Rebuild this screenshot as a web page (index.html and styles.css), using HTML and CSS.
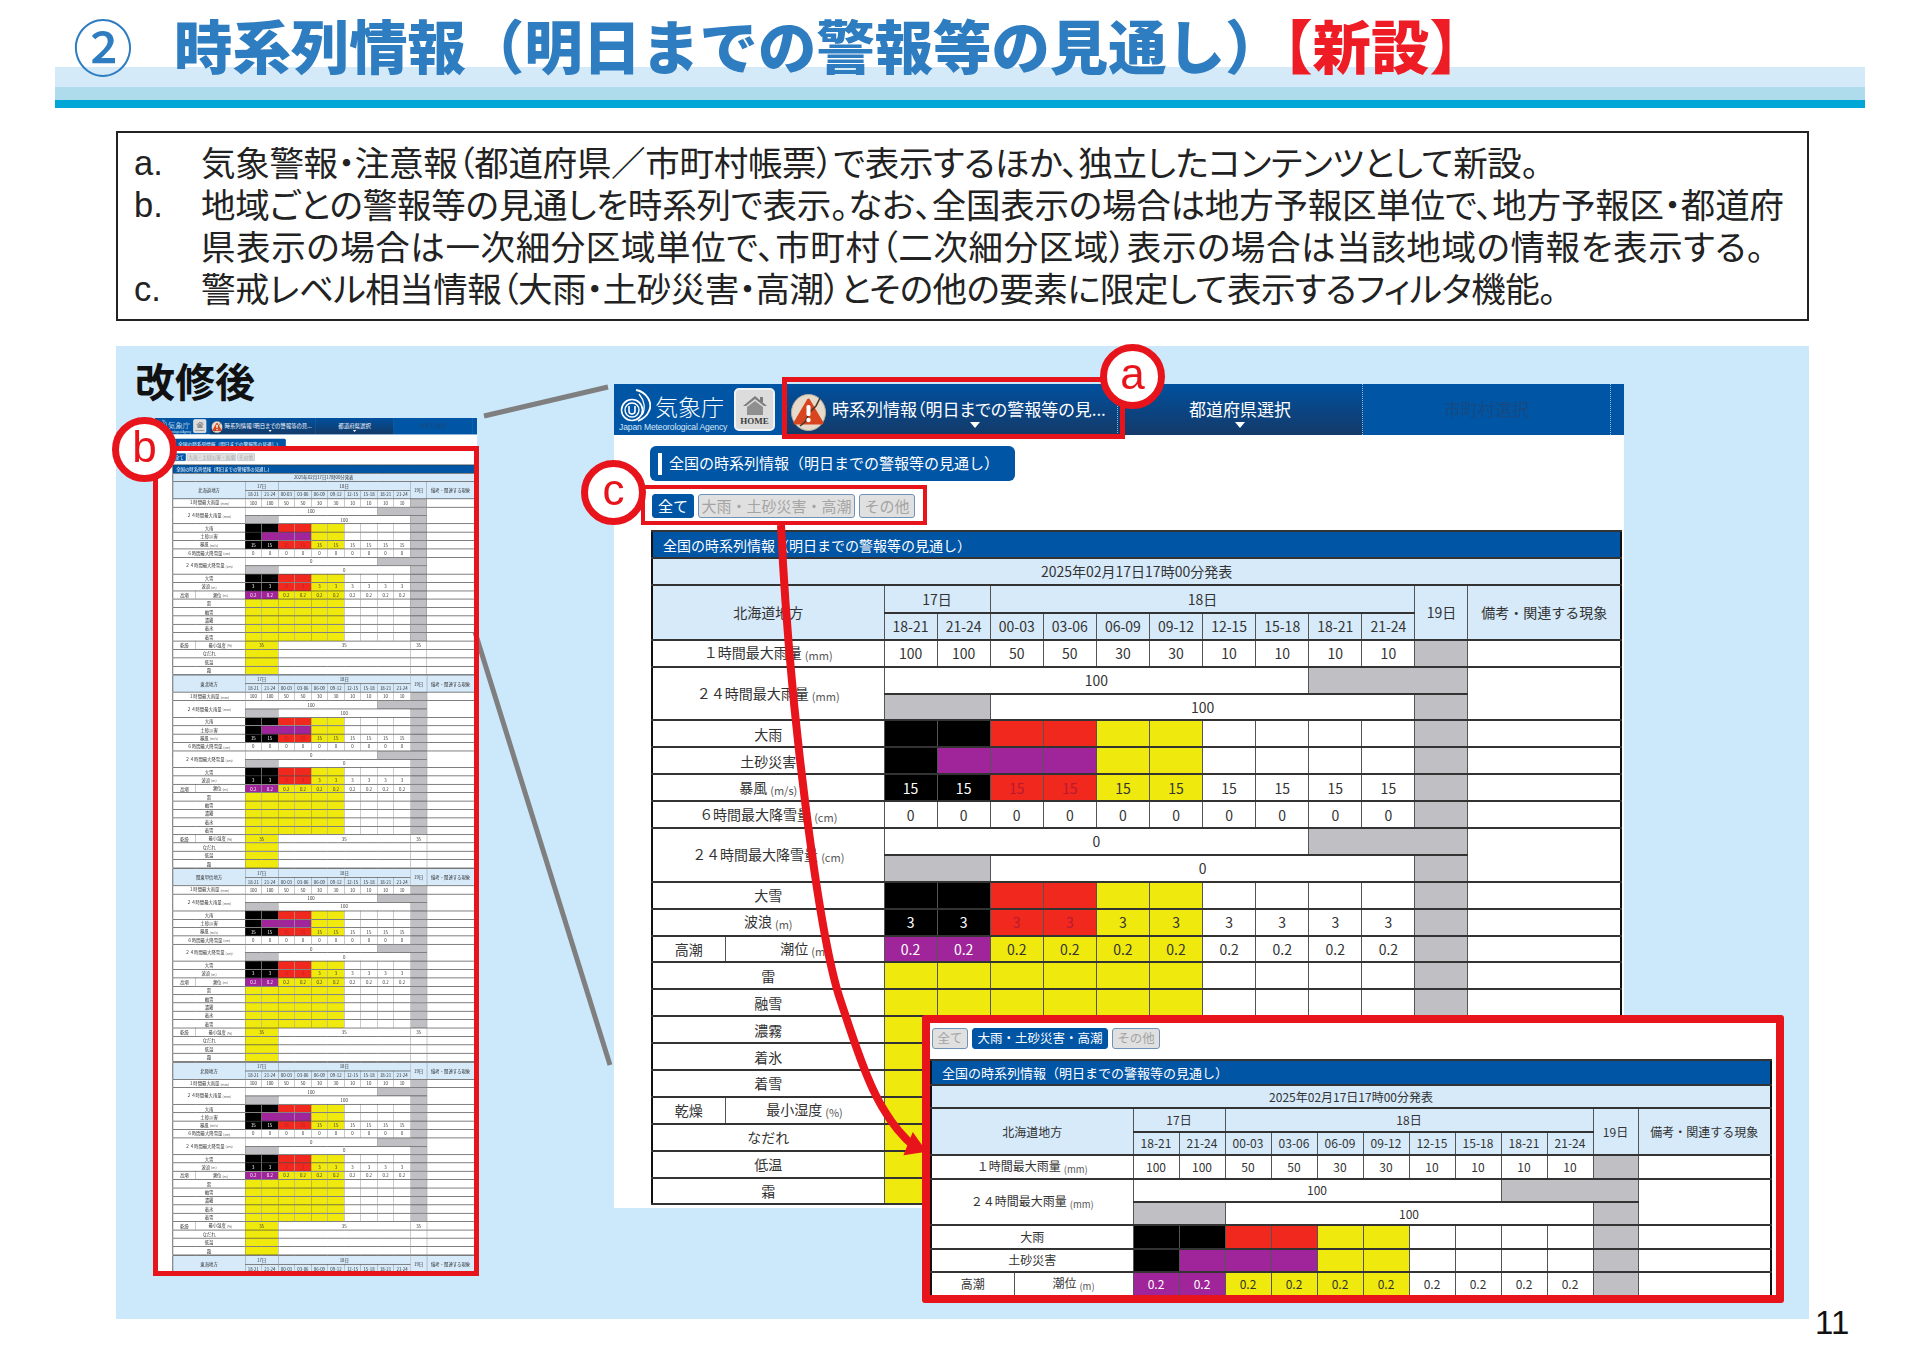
FILE: index.html
```html
<!DOCTYPE html>
<html lang="ja">
    <head>
        <meta charset="utf-8">
        <title>時系列情報(明日までの警報等の見通し)</title>
        <link rel="stylesheet" href="styles.css">
    </head>
    <body>
        <header class="title-band">
            <span class="title-no">②</span>
            <h1 class="title">時系列情報（明日までの警報等の見通し）<span class="title-new">【新設】</span></h1>
        </header>

        <ol class="notes">
            <li><span class="mark">a.</span><span class="note note-a">気象警報・注意報（都道府県／市町村帳票）で表示するほか、独立したコンテンツとして新設。</span></li>
            <li><span class="mark">b.</span><span class="note"><span class="note-b1">地域ごとの警報等の見通しを時系列で表示。なお、全国表示の場合は地方予報区単位で、地方予報区・都道府</span><br><span class="note-b2">県表示の場合は一次細分区域単位で、市町村（二次細分区域）表示の場合は当該地域の情報を表示する。</span></span></li>
            <li><span class="mark">c.</span><span class="note note-c">警戒レベル相当情報（大雨・土砂災害・高潮）とその他の要素に限定して表示するフィルタ機能。</span></li>
        </ol>

        <div class="lower">
            <section class="panel">
                <div class="left-col">
                    <h2 class="panel-title">改修後</h2>
                    <div class="mini-screen" id="miniScreen"></div>
                </div>

                <div class="screen" id="mainScreen">
                    <nav class="nav">
                        <div class="brand">
                            <div class="brand-top">
                                <svg class="logo" viewBox="0 0 32 33" width="32" height="33" fill="none" stroke="#fff">
                                    <circle cx="13" cy="21" r="10.5" stroke-width="1.6"/>
                                    <circle cx="13" cy="21" r="7" stroke-width="1.4"/>
                                    <path d="M10 17v5c0 4 6 4 6 0v-5" stroke-width="1.6"/>
                                    <path d="M17 1C28 3 34 14 30 22 28 27 24 30 19 32" stroke-width="1.8"/>
                                    <path d="M20 5c5 6 7 14 3 21" stroke-width="1.4"/>
                                </svg>
                                <span class="brand-name">気象庁</span>
                            </div>
                            <div class="brand-en">Japan Meteorological Agency</div>
                        </div>
                        <a class="home">
                            <svg viewBox="0 0 26 20" width="26" height="20">
                                <path d="M13 1L1 11h3l9-7 9 7h3z" fill="#7d7d7d"/>
                                <path d="M5 12l8-6 8 6v8H5z" fill="#8f8f8f"/>
                                <rect x="18" y="2" width="3" height="5" fill="#7d7d7d"/>
                            </svg>
                            <span>HOME</span>
                        </a>
                        <a class="tab tab-current">
                            <svg class="warn" viewBox="0 0 35 37" width="35" height="37">
                                <ellipse cx="17.5" cy="18.5" rx="17" ry="18" fill="#e6dacb" stroke="#b9ae9f"/>
                                <path d="M17.5 6L31 29H4z" fill="#d8451f" stroke="#d8451f" stroke-width="3" stroke-linejoin="round"/>
                                <path d="M29 4l-4 8-6 6-5 10-5 4" fill="none" stroke="#4a3a28" stroke-width="1.6"/>
                                <rect x="15.5" y="11" width="4" height="11" rx="1.5" fill="#fff"/>
                                <circle cx="17.5" cy="26" r="2.2" fill="#fff"/>
                            </svg>
                            <span class="tab-label">時系列情報（明日までの警報等の見...<i class="caret caret-off"></i></span>
                        </a>
                        <a class="tab tab-pref"><span class="tab-label">都道府県選択<i class="caret"></i></span></a>
                        <a class="tab tab-off"><span class="tab-label">市町村選択</span></a>
                        <a class="tab tab-end"></a>
                    </nav>
                    <div class="body" id="mainBody">
                        <h3 class="pill">全国の時系列情報（明日までの警報等の見通し）</h3>
                        <div class="filters">
                            <a class="filter filter-all on">全て</a>
                            <a class="filter filter-mid">大雨・土砂災害・高潮</a>
                            <a class="filter filter-other">その他</a>
                        </div>
                        <div class="table-slot" id="mainTable"></div>
                    </div>
                </div>

                <svg class="connect" width="1693" height="973" fill="none">
                    <path d="M368 70L492 41M359 286L494 719" stroke="#7f7f7f" stroke-width="5"/>
                    <path d="M665 179C674 373 704 593 724 653 744 713 760 770 800 802" stroke="#e8141c" stroke-width="8"/>
                    <path d="M797 788L809 805 789 808z" fill="#e8141c" stroke="#e8141c" stroke-width="2"/>
                </svg>

                <div class="zoom-card">
                    <div class="filters filters-sm">
                        <a class="filter filter-all">全て</a>
                        <a class="filter filter-mid on">大雨・土砂災害・高潮</a>
                        <a class="filter filter-other">その他</a>
                    </div>
                    <div id="zoomTable"></div>
                </div>

                <div class="hl hl-a"></div>
                <div class="hl hl-b"></div>
                <div class="hl hl-c"></div>
                <div class="badge badge-a">a</div>
                <div class="badge badge-b">b</div>
                <div class="badge badge-c">c</div>
            </section>
            <div class="page-no">11</div>
        </div>

        <script src="script.js"></script>
    </body>
</html>
```

FILE: styles.css
```css
* {
    box-sizing: border-box;
}

body {
    margin: 0;
    width: 1920px;
    height: 1356px;
    overflow: hidden;
    background: #fff;
    color: #222;
    font-family: "Noto Sans CJK JP", "Noto Sans", sans-serif;
}

h1, h2, h3 {
    margin: 0;
}

/* title */
.title-band {
    display: flex;
    margin: 0 55px;
    height: 108px;
    background: linear-gradient(to bottom, #fff 67px, #d5eaf8 67px, #d5eaf8 87px, #aedcec 87px, #aedcec 100px, #00a7d6 100px);
    color: #2f7dc1;
}

.title-no {
    width: 119px;
    padding: 5px 0 0 18px;
    font-size: 60px;
    font-weight: 500;
    line-height: 80px;
}

.title {
    font-size: 58.4px;
    font-weight: 900;
    line-height: 88px;
    white-space: nowrap;
}

.title-new {
    color: #ee1c25;
}

/* notes */
.notes {
    list-style: none;
    margin: 23px 0 0 116px;
    padding: 7px 0 0 16px;
    width: 1693px;
    height: 190px;
    border: 2px solid #222;
    font-size: 34.5px;
    line-height: 42px;
}

.notes li {
    display: flex;
}

.mark {
    width: 67px;
    height: 42px;
    font-family: "Liberation Sans", sans-serif;
    line-height: 46px;
}

.note {
    font-feature-settings: "palt";
    white-space: nowrap;
}

.note-a { letter-spacing: -0.3px; }
.note-b1 { letter-spacing: -0.2px; }
.note-b2 { letter-spacing: 0.6px; }
.note-c { letter-spacing: -0.5px; }

/* panel */
.lower {
    display: flex;
    align-items: flex-end;
    margin: 25px 0 0 116px;
}

.panel {
    position: relative;
    display: flex;
    align-items: flex-start;
    width: 1693px;
    height: 973px;
    background: #cce8fb;
}

.page-no {
    margin: 0 0 -24px 6px;
    font-family: "Liberation Sans", sans-serif;
    font-size: 33px;
    line-height: 40px;
    color: #111;
}

.left-col {
    width: 322px;
    margin-left: 39px;
}

.panel-title {
    margin-left: -20px;
    height: 72px;
    font-size: 40px;
    font-weight: 700;
    line-height: 68px;
    color: #111;
}

/* screenshot */
.screen {
    width: 1010px;
    height: 824px;
    margin: 38px 0 0 137px;
    background: #fff;
    overflow: hidden;
}

.nav {
    display: flex;
    width: 1010px;
    height: 51px;
    background: #0055a5;
    color: #fff;
}

.brand {
    width: 120px;
    padding: 5px 0 0 5px;
}

.brand-top {
    display: flex;
    align-items: flex-end;
    height: 33px;
    gap: 4px;
}

.brand-name {
    font-size: 23px;
    font-weight: 300;
    line-height: 31px;
}

.brand-en {
    font-family: "Liberation Sans", sans-serif;
    font-size: 8.6px;
    line-height: 11px;
    white-space: nowrap;
    letter-spacing: -0.15px;
    color: #d7e7f5;
}

.home {
    display: flex;
    flex-direction: column;
    align-items: center;
    width: 41px;
    height: 43px;
    margin: 4px 0 0 0;
    padding-top: 5px;
    border: 2px solid #f2f2f2;
    border-radius: 5px;
    background: #dcdcdc;
    color: #3c3c3c;
    font-family: "Liberation Serif", serif;
    font-size: 9px;
    font-weight: 700;
    line-height: 12px;
}

.tab {
    display: flex;
    justify-content: center;
    height: 51px;
    border-right: 1px dotted #8fbde0;
    background: linear-gradient(to bottom, #00509f, #143a68);
    font-size: 17px;
    white-space: nowrap;
}

.tab-label {
    display: flex;
    flex-direction: column;
    align-items: center;
    padding-top: 14px;
    line-height: 22px;
    font-feature-settings: "palt";
}

.caret {
    width: 0;
    height: 0;
    margin-top: 2px;
    border-left: 5px solid transparent;
    border-right: 5px solid transparent;
    border-top: 6px solid #fff;
}

.caret-off {
    margin-left: 12px;
}

.tab-current {
    justify-content: flex-start;
    width: 331px;
    margin-left: 12px;
    padding-left: 4px;
    gap: 6px;
}

.warn {
    margin-top: 10px;
}

.tab-pref {
    width: 245px;
}

.tab-off {
    width: 248px;
    background: #0055a5;
    color: #174a82;
}

.tab-end {
    flex: 1;
    background: #0055a5;
    border-right: 0;
}

.pill {
    position: relative;
    width: 365px;
    height: 35px;
    margin: 11px 0 0 36px;
    padding-left: 19px;
    border-radius: 6px;
    background: #0055a5;
    color: #fff;
    font-size: 15px;
    font-weight: 400;
    line-height: 33px;
    white-space: nowrap;
}

.pill::before {
    content: "";
    position: absolute;
    left: 8px;
    top: 7px;
    width: 4px;
    height: 22px;
    background: #fff;
}

.filters {
    display: flex;
    gap: 4px;
    height: 24px;
    margin: 13px 0 0 38px;
}

.filter {
    height: 24px;
    border: 1px solid #6f93b8;
    border-radius: 3px;
    background: #e0e0e0;
    color: #a4a4a4;
    font-size: 15px;
    line-height: 21px;
    text-align: center;
    white-space: nowrap;
}

.filter.on {
    border-color: #0055a5;
    background: #0055a5;
    color: #fff;
}

.filter-all {
    width: 42px;
}

.filter-mid {
    width: 157px;
}

.filter-other {
    width: 56px;
}

.table-slot {
    margin: 12px 0 0 37px;
}

/* forecast table */
.wx {
    table-layout: fixed;
    width: 970px;
    border-collapse: collapse;
    border: 2px solid #111;
    background: #fff;
    color: #333;
    font-size: 14px;
    line-height: 1;
    text-align: center;
}

.wx tr {
    height: 26.9px;
}

.wx th, .wx td {
    padding: 0;
    overflow: hidden;
    border-style: solid;
    border-color: #333 #555;
    border-width: 2px 1px;
    font-weight: 400;
    white-space: nowrap;
}

.wx th {
    background: #d6eafa;
}

.wx .row-title {
    height: 27px;
}

.wx .row-title th {
    padding-left: 10px;
    background: #0055a5;
    color: #fff;
    text-align: left;
}

.wx .row-day {
    height: 28px;
}

.wx .unit {
    margin-left: 3px;
    color: #555;
    font-size: 11px;
    vertical-align: -2px;
}

.col-a { width: 73px; }
.col-b { width: 159px; }
.col-h { width: 53.1px; }
.col-d { width: 53px; }
.col-r { width: 153px; }

.k { background: #000; color: #fff; }
.r { background: #f0281e; color: #b81a30; }
.p { background: #a0249a; color: #fff; }
.y { background: #f0e90e; }
.g { background: #c0c0c4; }

/* enlarged view */
.zoom-card {
    position: absolute;
    left: 806px;
    top: 669px;
    width: 862px;
    height: 288px;
    padding: 5px 0 0 0;
    border: 8px solid #e8141c;
    border-radius: 3px;
    background: #fff;
    overflow: hidden;
}

.filters-sm {
    height: 21px;
    margin: 0 0 10px 2px;
}

.filters-sm .filter {
    height: 21px;
    font-size: 12.5px;
    line-height: 18px;
}

.filters-sm .filter-all { width: 36px; }
.filters-sm .filter-mid { width: 136px; }
.filters-sm .filter-other { width: 48px; }

.zoom-card .wx {
    width: 840px;
    font-size: 12px;
}

.zoom-card .wx tr { height: 23.4px; }
.zoom-card .wx .row-title { height: 25px; }
.zoom-card .wx .row-title th { font-size: 13px; }
.zoom-card .wx .unit { font-size: 9.5px; }
.zoom-card .col-a { width: 83px; }
.zoom-card .col-b { width: 119px; }
.zoom-card .col-h { width: 46px; }
.zoom-card .col-d { width: 45px; }
.zoom-card .col-r { width: 133px; }

/* small overview */
.mini-screen {
    height: 858px;
    background: #fff;
    overflow: hidden;
}

.mini-nav {
    height: 17px;
    width: 1010px;
    transform: scale(0.3188);
    transform-origin: 0 0;
}

.mini-body {
    display: flow-root;
    width: 1010px;
    margin-left: 5.5px;
    transform: scale(0.3113);
    transform-origin: 0 0;
}

.mini-body .wx + .wx {
    border-top: 0;
}

/* callouts */
.connect {
    position: absolute;
    left: 0;
    top: 0;
}

.hl {
    position: absolute;
    border: 5px solid #e8141c;
}

.hl-a {
    left: 666px;
    top: 31px;
    width: 343px;
    height: 62px;
}

.hl-b {
    left: 37px;
    top: 100px;
    width: 326px;
    height: 830px;
}

.hl-c {
    left: 525px;
    top: 139px;
    width: 286px;
    height: 40px;
    border-width: 4px;
}

.badge {
    position: absolute;
    width: 65px;
    height: 65px;
    border: 7px solid #e8141c;
    border-radius: 50%;
    background: #fff;
    color: #e8141c;
    font-family: "Liberation Sans", sans-serif;
    font-size: 44px;
    line-height: 46px;
    text-align: center;
}

.badge-a { left: 984px; top: -2px; }
.badge-b { left: -4px; top: 71px; }
.badge-c { left: 465px; top: 114px; }
```

FILE: script.js
```js
// forecast tables: one data list, drawn at three sizes
var HOURS = ['18-21', '21-24', '00-03', '03-06', '06-09', '09-12', '12-15', '15-18', '18-21', '21-24'];
var STORM = 'kkrryywwww';
var PLAIN = 'wwwwwwwwww';
var AMBER = 'yyyyyywwww';

var ROWS = [
    { id: 'r1', label: '１時間最大雨量', unit: '(mm)', colors: PLAIN, vals: [100, 100, 50, 50, 30, 30, 10, 10, 10, 10] },
    { id: 'r24', label: '２４時間最大雨量', unit: '(mm)', span: '100' },
    { id: 'rain', label: '大雨', colors: STORM },
    { id: 'land', label: '土砂災害', colors: 'kpppyywwww' },
    { id: 'wind', label: '暴風', unit: '(m/s)', colors: STORM, val: 15 },
    { id: 's6', label: '６時間最大降雪量', unit: '(cm)', colors: PLAIN, val: 0 },
    { id: 's24', label: '２４時間最大降雪量', unit: '(cm)', span: '0' },
    { id: 'snow', label: '大雪', colors: STORM },
    { id: 'wave', label: '波浪', unit: '(m)', colors: STORM, val: 3 },
    { id: 'tide', group: '高潮', label: '潮位', unit: '(m)', colors: 'ppyyyywwww', val: 0.2 },
    { id: 'thunder', label: '雷', colors: AMBER },
    { id: 'melt', label: '融雪', colors: AMBER },
    { id: 'fog', label: '濃霧', colors: AMBER },
    { id: 'ice', label: '着氷', colors: AMBER },
    { id: 'rime', label: '着雪', colors: AMBER },
    { id: 'dry', group: '乾燥', label: '最小湿度', unit: '(%)', dry: '35' },
    { id: 'aval', label: 'なだれ', dry: '' },
    { id: 'cold', label: '低温', dry: '' },
    { id: 'frost', label: '霜', dry: '' }
];

function labelCell(row, rowspan) {
    var unit = row.unit ? '<span class="unit">' + row.unit + '</span>' : '';
    var span = rowspan ? ' rowspan="2"' : '';
    if (row.group) {
        return '<td' + span + '>' + row.group + '</td><td' + span + '>' + row.label + unit + '</td>';
    }
    return '<td colspan="2"' + span + '>' + row.label + unit + '</td>';
}

function rowHtml(row) {
    var html = '<tr>' + labelCell(row, !!row.span);
    if (row.span) {
        html += '<td colspan="8">' + row.span + '</td><td colspan="3" class="g"></td><td rowspan="2"></td></tr>';
        html += '<tr><td colspan="2" class="g"></td><td colspan="8">' + row.span + '</td><td class="g"></td></tr>';
        return html;
    }
    if ('dry' in row) {
        html += '<td colspan="2" class="y">' + row.dry + '</td><td colspan="8">' + row.dry + '</td>';
        html += '<td>' + row.dry + '</td><td></td></tr>';
        return html;
    }
    for (var i = 0; i < 10; i++) {
        var text = row.vals ? row.vals[i] : ('val' in row ? row.val : '');
        html += '<td class="' + row.colors[i] + '">' + text + '</td>';
    }
    return html + '<td class="g"></td><td></td></tr>';
}

function tableHtml(area, rows, withTitle) {
    var html = '<table class="wx"><colgroup><col class="col-a"><col class="col-b">';
    HOURS.forEach(function () { html += '<col class="col-h">'; });
    html += '<col class="col-d"><col class="col-r"></colgroup>';
    if (withTitle) {
        html += '<tr class="row-title"><th colspan="14">全国の時系列情報（明日までの警報等の見通し）</th></tr>';
        html += '<tr><th colspan="14">2025年02月17日17時00分発表</th></tr>';
    }
    html += '<tr class="row-day"><th colspan="2" rowspan="2">' + area + '</th><th colspan="2">17日</th>' +
        '<th colspan="8">18日</th><th rowspan="2">19日</th><th rowspan="2">備考・関連する現象</th></tr><tr>';
    HOURS.forEach(function (h) { html += '<th>' + h + '</th>'; });
    html += '</tr>';
    rows.forEach(function (r) { html += rowHtml(r); });
    return html + '</table>';
}

var ZOOM_IDS = ['r1', 'r24', 'rain', 'land', 'tide'];
document.getElementById('mainTable').innerHTML = tableHtml('北海道地方', ROWS, true);
document.getElementById('zoomTable').innerHTML = tableHtml('北海道地方', ROWS.filter(function (r) {
    return ZOOM_IDS.indexOf(r.id) >= 0;
}), true);

// overview column is the same page shrunk, regions stacked
var mini = document.getElementById('miniScreen');
var main = document.getElementById('mainScreen');

var miniNav = document.createElement('div');
miniNav.className = 'mini-nav';
miniNav.appendChild(main.querySelector('.nav').cloneNode(true));
mini.appendChild(miniNav);

var miniBody = document.createElement('div');
miniBody.className = 'mini-body';
var parts = main.querySelector('.body').cloneNode(true);
var stack = parts.querySelector('.table-slot');
stack.removeAttribute('id');
// only the header of the last region fits in the column
stack.innerHTML = ['北海道地方', '東北地方', '関東甲信地方', '北陸地方', '東海地方'].map(function (area, i) {
    return tableHtml(area, i === 4 ? [] : ROWS, i === 0);
}).join('');
parts.removeAttribute('id');
miniBody.appendChild(parts);
mini.appendChild(miniBody);
```
